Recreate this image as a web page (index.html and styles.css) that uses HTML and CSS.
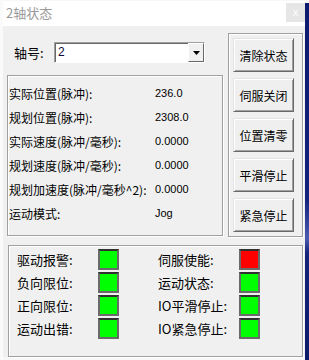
FILE: index.html
```html
<!DOCTYPE html>
<html>
<head>
    <meta name="viewport" content="width=device-width, initial-scale=1.0">
    <link rel="stylesheet" href="styles.css">
</head>
<body>
    <div class="screen">
        <div class="edge-left"></div>

        <div class="window">
            <div class="titlebar">
                <span class="title">2轴状态</span>
                <span class="close">x</span>
            </div>

            <div class="body">
                <div class="top">
                    <div class="left-col">
                        <div class="axis-row">
                            <span class="axis-label">轴号:</span>
                            <div class="combo">
                                <span class="combo-value">2</span>
                                <span class="combo-btn">
                                    <svg width="7" height="4" viewBox="0 0 7 4"><path d="M0 0h7L3.5 4z" fill="#000"/></svg>
                                </span>
                            </div>
                        </div>

                        <div class="group info">
                            <div class="info-label">实际位置(脉冲):</div><div class="info-value">236.0</div>
                            <div class="info-label">规划位置(脉冲):</div><div class="info-value">2308.0</div>
                            <div class="info-label">实际速度(脉冲/毫秒):</div><div class="info-value">0.0000</div>
                            <div class="info-label">规划速度(脉冲/毫秒):</div><div class="info-value">0.0000</div>
                            <div class="info-label">规划加速度(脉冲/毫秒^2):</div><div class="info-value">0.0000</div>
                            <div class="info-label">运动模式:</div><div class="info-value">Jog</div>
                        </div>
                    </div>

                    <div class="group actions">
                        <button class="btn">清除状态</button>
                        <button class="btn">伺服关闭</button>
                        <button class="btn">位置清零</button>
                        <button class="btn">平滑停止</button>
                        <button class="btn">紧急停止</button>
                    </div>
                </div>

                <div class="group signals">
                    <div class="signal"><span class="signal-label">驱动报警:</span><span class="lamp on"></span></div>
                    <div class="signal"><span class="signal-label">伺服使能:</span><span class="lamp alarm"></span></div>
                    <div class="signal"><span class="signal-label">负向限位:</span><span class="lamp on"></span></div>
                    <div class="signal"><span class="signal-label">运动状态:</span><span class="lamp on"></span></div>
                    <div class="signal"><span class="signal-label">正向限位:</span><span class="lamp on"></span></div>
                    <div class="signal"><span class="signal-label">IO平滑停止:</span><span class="lamp on"></span></div>
                    <div class="signal"><span class="signal-label">运动出错:</span><span class="lamp on"></span></div>
                    <div class="signal"><span class="signal-label">IO紧急停止:</span><span class="lamp on"></span></div>
                </div>
            </div>
        </div>

        <div class="edge-right"></div>
    </div>
</body>
</html>
```

FILE: styles.css
```css
* {
    margin: 0;
    padding: 0;
    box-sizing: border-box;
}

body {
    background: #f7f7f7;
    font-family: "Noto Sans CJK SC", "Noto Sans", sans-serif;
    color: #000;
    overflow: hidden;
}

.screen {
    display: flex;
    width: 309px;
    height: 360px;
}

.edge-left {
    width: 3px;
    background: #fafafa;
}

.window {
    width: 302px;
    height: 356px;
    margin-top: 1px;
    background: #f0f0f0;
}

.edge-right {
    width: 4px;
    margin-top: 3px;
    background: linear-gradient(#0c1a6e 0%, #12237c 55%, #4a5cb0 66%, #13247a 70%, #0b1a68 100%);
}

/* title bar */
.titlebar {
    height: 25px;
    background: #fff;
    display: flex;
    justify-content: space-between;
    align-items: flex-start;
}

.title {
    padding-left: 3px;
    line-height: 24px;
    font-size: 13px;
    color: #9a9a9a;
}

.close {
    width: 19px;
    height: 19px;
    margin-top: 2px;
    background: #e6e6e6;
    color: #fff;
    font-family: "Liberation Sans", sans-serif;
    font-size: 11px;
    line-height: 18px;
    text-align: center;
}

/* dialog body */
.body {
    height: 331px;
    padding-left: 4px;
}

.top {
    display: flex;
    gap: 5px;
}

.left-col {
    width: 216px;
}

.group {
    border: 1px solid #a0a0a0;
    box-shadow: inset 1px 1px 0 #fff, 1px 1px 0 #fff;
}

.axis-row {
    height: 49px;
    padding: 16px 0 0 7px;
    display: flex;
    align-items: flex-start;
}

.axis-label {
    width: 40px;
    font-size: 13px;
    line-height: 21px;
}

.combo {
    width: 151px;
    height: 21px;
    background: #fff;
    border: 1px solid;
    border-color: #a0a0a0 #fff #fff #a0a0a0;
    box-shadow: inset 1px 1px 0 #696969;
    display: flex;
    justify-content: space-between;
}

.combo-value {
    padding-left: 3px;
    font-family: "Liberation Sans", sans-serif;
    font-size: 12px;
    line-height: 19px;
    color: #0a0a3a;
}

.combo-btn {
    width: 16px;
    height: 19px;
    background: #f0f0f0;
    border: 1px solid;
    border-color: #fff #696969 #696969 #fff;
    display: flex;
    justify-content: center;
    align-items: center;
}

.info {
    height: 161px;
    padding: 5px 0 0 1px;
    display: grid;
    grid-template-columns: 146px auto;
    grid-auto-rows: 24px;
    align-items: center;
}

.info-label {
    font-size: 12px;
}

.info-value {
    font-family: "Liberation Sans", sans-serif;
    font-size: 11px;
}

/* buttons */
.actions {
    width: 75px;
    height: 204px;
    margin-top: 7px;
    padding: 4px 8px 4px 4px;
    display: flex;
    flex-direction: column;
    gap: 6px;
}

.btn {
    width: 61px;
    height: 34px;
    background: #efefef;
    border: 1px solid;
    border-color: #e3e3e3 #696969 #696969 #e3e3e3;
    box-shadow: inset 1px 1px 0 #fff, inset -1px -1px 0 #a0a0a0;
    font-family: "Noto Sans CJK SC", sans-serif;
    font-size: 12px;
    color: #000;
}

/* signal lamps */
.signals {
    width: 295px;
    height: 112px;
    margin: 8px 0 0 1px;
    padding: 3px 0 0 8px;
    display: grid;
    grid-template-columns: 141px 141px;
    grid-auto-rows: 21px;
    row-gap: 2px;
}

.signal {
    display: flex;
    align-items: center;
}

.signal-label {
    width: 81px;
    font-size: 13px;
}

.lamp {
    width: 21px;
    height: 21px;
    border: 2px solid #6a6a6a;
    border-top-color: #303030;
}

.lamp.on {
    background: #00ff00;
}

.lamp.alarm {
    background: #ff0000;
}
```
